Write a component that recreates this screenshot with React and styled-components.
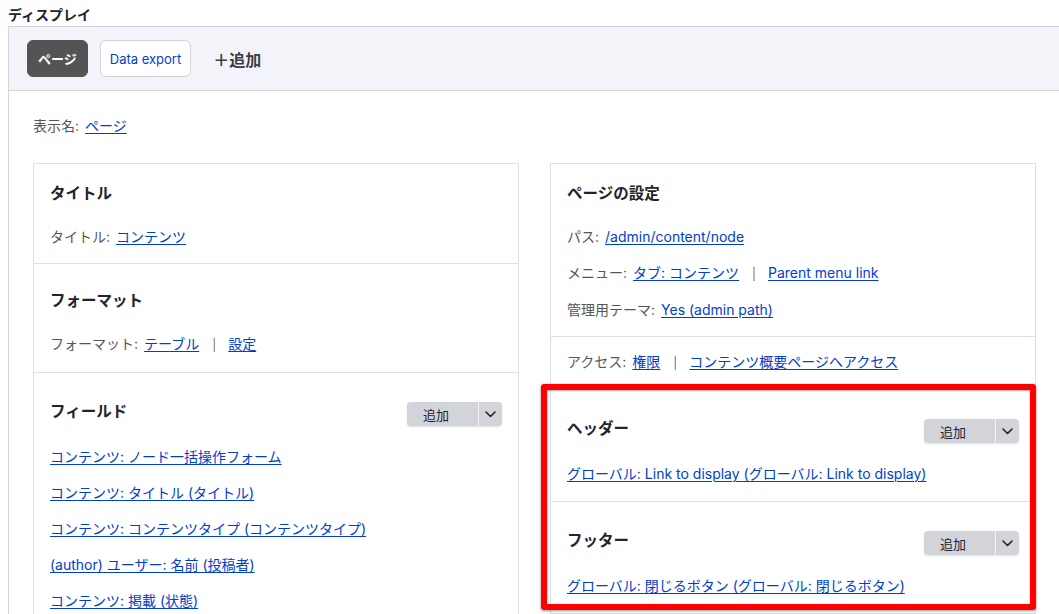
import React from "react";
import styled, { createGlobalStyle } from "styled-components";

const Global = createGlobalStyle`
  html, body { margin: 0; padding: 0; overflow: hidden; background: #fff; }
  body {
    font-family: Inter, "Noto Sans CJK JP", sans-serif;
    color: #222330;
    -webkit-font-smoothing: antialiased;
  }
`;

const Page = styled.div`
  padding: 0 8px;
`;

const PageTitle = styled.h2`
  margin: 0 0 1px;
  padding-top: 5px;
  font-size: 14px;
  line-height: 20px;
  font-weight: 700;
  color: #222330;
`;

const Container = styled.div`
  width: 1053px;
  box-sizing: border-box;
  border: 1px solid #d3d4d9;
  border-bottom: none;
  background: #fff;
`;

const TabBar = styled.div`
  display: flex;
  align-items: center;
  gap: 12px;
  padding: 13px 18px;
  background: #f3f4f9;
  border-bottom: 1px solid #d3d4d9;
`;

const Tab = styled.button`
  height: 37px;
  box-sizing: border-box;
  padding: 0 ${(p) => (p.$active ? "10px" : "9px")};
  border-radius: 6px;
  border: 1px solid ${(p) => (p.$active ? "#545454" : "#d3d4d9")};
  background: ${(p) => (p.$active ? "#545454" : "#fff")};
  color: ${(p) => (p.$active ? "#fff" : "#003ecc")};
  font-family: inherit;
  font-size: 13px;
  font-weight: ${(p) => (p.$active ? 600 : 400)};
  cursor: pointer;
`;

const AddDisplay = styled.button`
  margin-left: 10px;
  padding: 0;
  border: none;
  background: none;
  font-family: inherit;
  font-size: 16px;
  font-weight: 600;
  color: #3b3c46;
  display: flex;
  align-items: center;
`;

const Body = styled.div`
  padding: 25px 24px 0;
`;

const DisplayName = styled.div`
  font-size: 14px;
  line-height: 20px;
  color: #55565b;
  margin-bottom: 27px;
`;

const Columns = styled.div`
  display: grid;
  grid-template-columns: 1fr 1fr;
  gap: 31px;
  align-items: start;
`;

const Card = styled.div`
  border: 1px solid #dedfe4;
  border-bottom: none;
  background: #fff;
`;

const Section = styled.div`
  padding: ${(p) =>
      p.$first ? "20px" : p.$plain ? "15px" : p.$action ? "29px" : "27px"}
    16px ${(p) => (p.$first || p.$plain ? "16px" : "17px")};
  border-bottom: 1px solid #dedfe4;
`;

const SectionHead = styled.div`
  display: flex;
  align-items: flex-start;
  justify-content: space-between;
  min-height: 22px;
  margin-bottom: 21px;
`;

const Heading = styled.h3`
  margin: 0;
  font-size: 15.5px;
  line-height: 20px;
  font-weight: 700;
  color: #222330;
`;

const Line = styled.div`
  font-size: 14px;
  line-height: 20px;
  color: #55565b;
  & + & {
    margin-top: 16px;
  }
`;

const Label = styled.span`
  margin-right: 6px;
`;

const Link = styled.a`
  color: #003ecc;
  text-decoration: underline;
  text-decoration-thickness: 1px;
  text-underline-offset: 2px;
  cursor: pointer;
`;

const Sep = styled.span`
  display: inline-block;
  margin: 0 12px 0 13px;
  font-size: 12px;
  color: #6b6c72;
  transform: translateZ(0);
`;

const SplitButton = styled.div`
  display: inline-flex;
  height: 24px;
  border-radius: 4px;
  background: #d3d4d9;
  overflow: hidden;
  box-shadow: 0 1px 2px rgba(0, 0, 0, 0.12);
`;

const SplitMain = styled.span`
  width: 72px;
  box-sizing: border-box;
  padding-left: 16px;
  display: flex;
  align-items: center;
  font-size: 13px;
  color: #222330;
  border-right: 1px solid #f3f4f9;
`;

const SplitToggle = styled.span`
  width: 23px;
  display: flex;
  align-items: center;
  justify-content: center;
`;

const Highlight = styled.div`
  position: relative;
`;

const Annotation = styled.div`
  position: absolute;
  top: -6px;
  left: -10px;
  right: -1px;
  bottom: 4px;
  border: 6px solid #ff0000;
  border-radius: 3px;
  box-shadow: 0 1px 3px rgba(0, 0, 0, 0.45), inset 0 1px 2px rgba(0, 0, 0, 0.35);
  pointer-events: none;
`;

const Chevron = () => (
  <svg width="11" height="7" viewBox="0 0 11 7" fill="none">
    <path d="M1 1l4.5 4.5L10 1" stroke="#222330" strokeWidth="1.6" strokeLinecap="round" strokeLinejoin="round" />
  </svg>
);

const AddSplit = () => (
  <SplitButton>
    <SplitMain>追加</SplitMain>
    <SplitToggle>
      <Chevron />
    </SplitToggle>
  </SplitButton>
);

const fields = [
  "コンテンツ: ノード一括操作フォーム",
  "コンテンツ: タイトル (タイトル)",
  "コンテンツ: コンテンツタイプ (コンテンツタイプ)",
  "(author) ユーザー: 名前 (投稿者)",
  "コンテンツ: 掲載 (状態)",
];

export default function App() {
  return (
    <>
      <Global />
      <Page>
        <PageTitle>ディスプレイ</PageTitle>
        <Container>
          <TabBar>
            <Tab $active>ページ</Tab>
            <Tab>Data export</Tab>
            <AddDisplay>＋追加</AddDisplay>
          </TabBar>
          <Body>
            <DisplayName>
              <Label>表示名:</Label>
              <Link>ページ</Link>
            </DisplayName>
            <Columns>
              <Card>
                <Section $first>
                  <SectionHead>
                    <Heading>タイトル</Heading>
                  </SectionHead>
                  <Line>
                    <Label>タイトル:</Label>
                    <Link>コンテンツ</Link>
                  </Line>
                </Section>
                <Section>
                  <SectionHead>
                    <Heading>フォーマット</Heading>
                  </SectionHead>
                  <Line>
                    <Label>フォーマット:</Label>
                    <Link>テーブル</Link>
                    <Sep>|</Sep>
                    <Link>設定</Link>
                  </Line>
                </Section>
                <Section $action>
                  <SectionHead>
                    <Heading>フィールド</Heading>
                    <AddSplit />
                  </SectionHead>
                  {fields.map((f) => (
                    <Line key={f}>
                      <Link>{f}</Link>
                    </Line>
                  ))}
                </Section>
              </Card>
              <Card>
                <Section $first>
                  <SectionHead>
                    <Heading>ページの設定</Heading>
                  </SectionHead>
                  <Line>
                    <Label>パス:</Label>
                    <Link>/admin/content/node</Link>
                  </Line>
                  <Line>
                    <Label>メニュー:</Label>
                    <Link>タブ: コンテンツ</Link>
                    <Sep>|</Sep>
                    <Link>Parent menu link</Link>
                  </Line>
                  <Line>
                    <Label>管理用テーマ:</Label>
                    <Link>Yes (admin path)</Link>
                  </Line>
                </Section>
                <Section $plain>
                  <Line>
                    <Label>アクセス:</Label>
                    <Link>権限</Link>
                    <Sep>|</Sep>
                    <Link>コンテンツ概要ページへアクセス</Link>
                  </Line>
                </Section>
                <Highlight>
                  <Section $action>
                    <SectionHead>
                      <Heading>ヘッダー</Heading>
                      <AddSplit />
                    </SectionHead>
                    <Line>
                      <Link>グローバル: Link to display (グローバル: Link to display)</Link>
                    </Line>
                  </Section>
                  <Section $action>
                    <SectionHead>
                      <Heading>フッター</Heading>
                      <AddSplit />
                    </SectionHead>
                    <Line>
                      <Link>グローバル: 閉じるボタン (グローバル: 閉じるボタン)</Link>
                    </Line>
                  </Section>
                  <Annotation />
                </Highlight>
              </Card>
            </Columns>
          </Body>
        </Container>
      </Page>
    </>
  );
}
